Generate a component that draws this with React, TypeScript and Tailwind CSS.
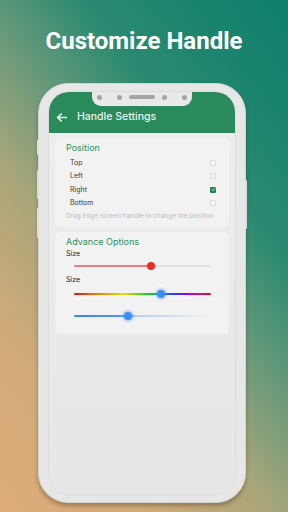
import React from 'react';

const app = { fontFamily: 'Inter, "Noto Sans", sans-serif' };

const positions = [
  { label: 'Top', checked: false },
  { label: 'Left', checked: false },
  { label: 'Right', checked: true },
  { label: 'Bottom', checked: false },
];

function Checkbox({ checked }: { checked: boolean }) {
  if (checked) {
    return (
      <div className="w-[6px] h-[6px] rounded-[1px] bg-[#1f8a52] flex items-center justify-center">
        <svg width="5" height="5" viewBox="0 0 10 10">
          <path d="M2 5.2l2 2 4-4.4" fill="none" stroke="#fff" strokeWidth="1.6" />
        </svg>
      </div>
    );
  }
  return <div className="w-[6px] h-[6px] rounded-[1px] border-[0.5px] border-[#dcdcdc] bg-[#f4f4f4]" />;
}

function Thumb({ left, color, glow }: { left: number; color: string; glow?: boolean }) {
  return (
    <div
      className="absolute top-1/2 w-[8px] h-[8px] -ml-[4px] -mt-[4px] rounded-full"
      style={{
        left: `${left}%`,
        background: color,
        boxShadow: glow ? `0 0 3px 1px ${color}99` : undefined,
      }}
    />
  );
}

export default function App() {
  return (
    <div className="w-[288px] h-[512px] overflow-hidden bg-[linear-gradient(52deg,#deac78_0%,#cfaa79_22%,#a8a67a_40%,#68997a_55%,#2a8a70_70%,#0e7e6b_100%)]">
      {/* Heading */}
      <h1
        className="pt-[27px] text-center text-white text-[24px] leading-[28px] font-bold"
        style={{ fontFamily: 'Roboto, "Liberation Sans", sans-serif' }}
      >
        Customize Handle
      </h1>

      {/* Phone */}
      <div className="relative ml-[38px] mt-[28px] w-[208px] h-[420px] rounded-[30px] bg-[#e7e7e7] border border-[#d4d4d4] px-[10px] pt-[8px] pb-[8px] shadow-[0_3px_4px_rgba(60,40,20,0.35)]">
        {/* side buttons */}
        <div className="absolute -left-[2px] top-[56px] w-[2px] h-[15px] rounded-l-[1px] bg-[#dedede]" />
        <div className="absolute -left-[2px] top-[86px] w-[2px] h-[29px] rounded-l-[1px] bg-[#dedede]" />
        <div className="absolute -left-[2px] top-[124px] w-[2px] h-[30px] rounded-l-[1px] bg-[#dedede]" />
        <div className="absolute -right-[2px] top-[96px] w-[2px] h-[49px] rounded-r-[1px] bg-[#dedede]" />

        {/* Screen */}
        <div
          className="relative h-full rounded-[20px] overflow-hidden bg-[linear-gradient(180deg,#eeeeee,#e6e6e6)] ring-1 ring-[#dcdcdc] flex flex-col"
          style={app}
        >
          {/* notch */}
          <div className="absolute top-0 left-1/2 -translate-x-1/2 w-[100px] h-[14px] rounded-b-[9px] bg-[#e9e9e9] flex items-start pt-[2.5px] pl-[4.5px]">
            <div className="w-[5px] h-[5px] rounded-full bg-[#a4a4a4]" />
            <div className="ml-[15px] w-[5px] h-[5px] rounded-full bg-[#a4a4a4]" />
            <div className="ml-[7.5px] mt-[0.5px] w-[26px] h-[4px] rounded-full bg-[#a4a4a4]" />
            <div className="ml-[6.5px] w-[5px] h-[5px] rounded-full bg-[#a4a4a4]" />
            <div className="ml-[15px] w-[5px] h-[5px] rounded-full bg-[#a4a4a4]" />
          </div>

          {/* App bar */}
          <div className="h-[41px] shrink-0 bg-[#2b8a5b] pt-[17px] pl-[7px] flex items-start">
            <div className="h-[16px] flex items-center">
              <svg width="11" height="9" viewBox="0 0 11 9">
                <path d="M10.5 4.5H1.8M5.2 1L1.6 4.5 5.2 8" fill="none" stroke="#eef6f1" strokeWidth="1.7" strokeLinecap="round" strokeLinejoin="round" />
              </svg>
              <span className="ml-[10px] text-[10.5px] font-medium text-[#e9f4ed]">Handle Settings</span>
            </div>
          </div>

          <div className="px-[6px] pt-[5px] flex flex-col gap-[5px]">
            {/* Position card */}
            <div className="rounded-[5px] bg-[#f2f2f2] pt-[4px] pb-[3px]">
              <div className="h-[12px] pl-[11px] flex items-center text-[9px] text-[#2f8f5c]">Position</div>
              <div className="mt-[2px]">
                {positions.map((p) => (
                  <div key={p.label} className="h-[13.5px] pl-[15px] pr-[13px] flex items-center justify-between">
                    <span className="text-[7px] text-[#3a3a3a]">{p.label}</span>
                    <Checkbox checked={p.checked} />
                  </div>
                ))}
              </div>
              <div className="h-[14px] pl-[11px] flex items-center text-[6.5px] text-[#bdbdbd] whitespace-nowrap">
                Drag Edge screen handle to change the position
              </div>
            </div>

            {/* Advance options card */}
            <div className="rounded-[5px] bg-[#f2f2f2] pt-[4px] pb-[12px]">
              <div className="h-[12px] pl-[11px] flex items-center text-[9px] text-[#2f8f5c]">Advance Options</div>
              <div className="h-[12px] pl-[11px] flex items-center text-[7px] text-[#222]">Size</div>
              <div className="h-[12px] pl-[19px] pr-[18px] flex items-center">
                <div className="relative w-full h-[2px] bg-[#e2e2e2] rounded-full">
                  <div className="absolute left-0 top-0 h-full w-[56%] rounded-full bg-[#ef7c7c]" />
                  <Thumb left={56} color="#ee2b2b" />
                </div>
              </div>
              <div className="mt-[2px] h-[12px] pl-[11px] flex items-center text-[7px] text-[#222]">Size</div>
              <div className="mt-[2px] h-[12px] pl-[19px] pr-[18px] flex items-center">
                <div className="relative w-full h-[2.5px] rounded-full bg-[linear-gradient(90deg,#dc1414_0%,#ee7a08_16%,#e6dc06_36%,#14d01e_54%,#13a69a_62%,#2a3ef0_72%,#8a06e0_82%,#e0089e_92%,#dc0a14_100%)]">
                  <Thumb left={63.5} color="#3d8ef2" glow />
                </div>
              </div>
              <div className="mt-[10px] h-[12px] pl-[19px] pr-[18px] flex items-center">
                <div className="relative w-full h-[2.5px] rounded-full bg-[linear-gradient(90deg,#3b82ee_0%,#5a98f0_39%,#b4cff5_45%,rgba(220,232,248,0)_100%)]">
                  <Thumb left={39.4} color="#3d8ef2" glow />
                </div>
              </div>
            </div>
          </div>
        </div>
      </div>
    </div>
  );
}
